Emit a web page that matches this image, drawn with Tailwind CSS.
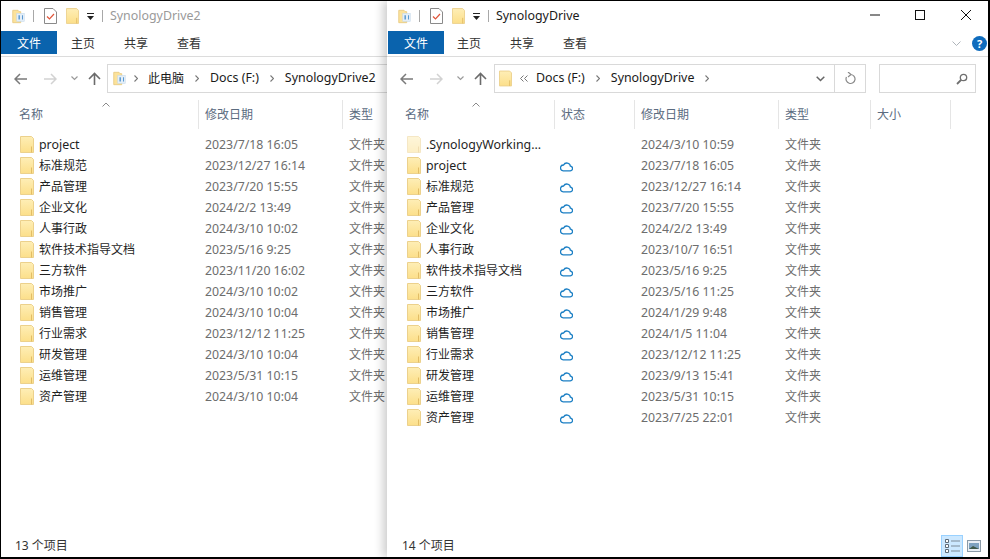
<!doctype html>
<html>
<head>
  <meta charset="UTF-8">
  <script src="https://cdn.jsdelivr.net/npm/@tailwindcss/browser@4"></script>
</head>
<body class="bg-white overflow-hidden font-['Noto_Sans','Noto_Sans_CJK_SC',sans-serif]">
<svg width="0" height="0" class="absolute">
  <defs>
    <linearGradient id="fold" x1="0" y1="0" x2="0" y2="1">
      <stop offset="0" stop-color="#feeeb6"/><stop offset="1" stop-color="#fcdf8a"/>
    </linearGradient>
    <symbol id="folder" viewBox="0 0 14 17">
      <path d="M.5.5h11l2 2v14H.5z" fill="url(#fold)" stroke="#ecd18c"/>
      <path d="M11.500 10.500v6" stroke="#e2bd66"/>
    </symbol>
    <symbol id="drive" viewBox="0 0 14 17">
      <path d="M.5 1.500h6l1 1.500h2v12.500H.5z" fill="#fce29a" stroke="#e8cb83"/>
      <rect x="5" y="5" width="8.500" height="9" fill="#e3eef8" stroke="#c3d7e8" stroke-width=".6"/>
      <path d="M7 7h1.500v5H7zM11 7h1v5h-1z" fill="#4a8fcb"/>
    </symbol>
    <symbol id="cloud" viewBox="0 0 13 11">
      <path d="M3.200 9.800h6.800a2.300 2.300 0 0 0 .4-4.600A3.600 3.600 0 0 0 3.600 4 2.900 2.900 0 0 0 3.200 9.800z" fill="none" stroke="#1b7fc4" stroke-width="1.300"/>
    </symbol>
  </defs>
</svg>

<div class="relative w-[990px] h-[559px] overflow-hidden bg-black">
  <div id="win-left" class="absolute left-[1px] top-[1px] w-[420px] h-[556px] bg-white"></div>
  <div id="win-right" class="absolute left-[387px] top-[1px] w-[601px] h-[556px] bg-white shadow-[-4px_0_9px_rgba(0,0,0,0.2)]"></div>
</div>

<script>
const leftRows = [
  ['project','2023/7/18 16:05'],['标准规范','2023/12/27 16:14'],['产品管理','2023/7/20 15:55'],
  ['企业文化','2024/2/2 13:49'],['人事行政','2024/3/10 10:02'],['软件技术指导文档','2023/5/16 9:25'],
  ['三方软件','2023/11/20 16:02'],['市场推广','2024/3/10 10:02'],['销售管理','2024/3/10 10:04'],
  ['行业需求','2023/12/12 11:25'],['研发管理','2024/3/10 10:04'],['运维管理','2023/5/31 10:15'],
  ['资产管理','2024/3/10 10:04']
];
const rightRows = [
  ['.SynologyWorking...','2024/3/10 10:59'],['project','2023/7/18 16:05'],['标准规范','2023/12/27 16:14'],
  ['产品管理','2023/7/20 15:55'],['企业文化','2024/2/2 13:49'],['人事行政','2023/10/7 16:51'],
  ['软件技术指导文档','2023/5/16 9:25'],['三方软件','2023/5/16 11:25'],['市场推广','2024/1/29 9:48'],
  ['销售管理','2024/1/5 11:04'],['行业需求','2023/12/12 11:25'],['研发管理','2023/9/13 15:41'],
  ['运维管理','2023/5/31 10:15'],['资产管理','2023/7/25 22:01']
];

function tabs(isRight) {
  return `
  <div class="flex h-[23px] items-center text-[12px] text-[#333]">
    <div class="${isRight ? 'ml-[1px]' : ''} w-[56px] h-full pt-[2px] bg-[#0a63ad] text-white flex items-center justify-center">文件</div>
    <div class="${isRight ? 'w-[13px]' : 'w-[14px]'}"></div><div class="w-[24px] pt-[2px]">主页</div>
    <div class="w-[29px]"></div><div class="w-[24px] pt-[2px]">共享</div>
    <div class="w-[29px]"></div><div class="w-[24px] pt-[2px]">查看</div>
  </div>`;
}

function titleBar(title, titleColor) {
  return `
  <div class="flex h-[30px] items-center">
    <svg class="ml-[11px] w-[13px] h-[15px]"><use href="#drive"/></svg>
    <div class="ml-[8px] w-px h-[12px] bg-[#a8a8a8]"></div>
    <svg class="ml-[10px]" width="13" height="16" viewBox="0 0 13 16"><path d="M.5.5h8.500l3.500 3.500v11.500H.5z" fill="#fff" stroke="#8a8a8a"/><path d="M3 8.500l2.500 2.500L10 6" fill="none" stroke="#e0553a" stroke-width="1.200"/></svg>
    <svg class="ml-[9px] w-[13px] h-[16px]"><use href="#folder"/></svg>
    <svg class="ml-[8px]" width="7" height="7" viewBox="0 0 7 7"><path d="M0 0h7v1H0zM0 3h7L3.500 7z" fill="#222"/></svg>
    <div class="ml-[8px] w-px h-[12px] bg-[#a8a8a8]"></div>
    <div class="ml-[7px] text-[12.4px] ${titleColor}">${title}</div>
  </div>`;
}

function navButtons() {
  return `
    <svg class="ml-[13px]" width="13" height="12" viewBox="0 0 13 12"><path d="M13 6H1.500M6 1L1 6l5 5" fill="none" stroke="#7a7a7a" stroke-width="1.500"/></svg>
    <svg class="ml-[17px]" width="13" height="12" viewBox="0 0 13 12"><path d="M0 6h11.500M7 1l5 5-5 5" fill="none" stroke="#d2d2d2" stroke-width="1.500"/></svg>
    <svg class="ml-[14px]" width="7" height="5" viewBox="0 0 7 5"><path d="M.5.5l3 3 3-3" fill="none" stroke="#9a9a9a" stroke-width="1.200"/></svg>
    <svg class="ml-[10px]" width="13" height="13" viewBox="0 0 13 13"><path d="M6.500 13V1.500M1 7l5.500-5.500L12 7" fill="none" stroke="#6b6b6b" stroke-width="1.600"/></svg>`;
}

const crumbArrow = `<svg class="mx-[11px] shrink-0" width="4" height="7" viewBox="0 0 4 7"><path d="M.5.5l3 3-3 3" fill="none" stroke="#777" stroke-width="1.100"/></svg>`;
const firstCrumbArrow = `<svg class="mx-[4px] shrink-0" width="4" height="7" viewBox="0 0 4 7"><path d="M.5.5l3 3-3 3" fill="none" stroke="#777" stroke-width="1.100"/></svg>`;

function header(cols, caretLeft) {
  const cells = cols.map((c, i) => `<div class="h-[29px] shrink-0 border-r border-[#e5e5e5] flex items-center text-[12px] text-[#5b6b7f] ${i === 0 ? 'pl-[18px]' : 'pl-[6px]'}" style="width:${c[1]}px">${c[0]}</div>`).join('');
  return `<div class="relative flex h-[29px] mt-[7px]">${cells}
    <svg class="absolute top-[2px]" style="left:${caretLeft}px" width="8" height="5" viewBox="0 0 8 5"><path d="M.5 4.500L4 1l3.500 3.500" fill="none" stroke="#8a8a8a"/></svg>
  </div>`;
}

function statusBar(text, showViews) {
  const views = showViews ? `
    <div class="ml-auto flex items-center h-full mr-[7px]">
      <div class="w-[22px] h-[22px] bg-[#cce8ff] border border-[#99d1ff] flex items-center justify-center">
        <svg width="15" height="14" viewBox="0 0 15 14"><path d="M.5.5h3v3h-3zM.5 5.500h3v3h-3zM.5 10.500h3v3h-3z" fill="#fff" stroke="#5d6b78"/><path d="M6 2h9M6 7h9M6 12h9" stroke="#7c8a97"/></svg>
      </div>
      <svg class="ml-[4px]" width="14" height="12" viewBox="0 0 14 12"><rect x=".5" y=".5" width="13" height="11" fill="#e9eff5" stroke="#8b9aa8"/><rect x="2" y="3" width="10" height="6" fill="#7fa3c0"/><path d="M2 9l4-3 6 3z" fill="#3f5a4a"/></svg>
    </div>` : '';
  return `<div class="absolute left-0 right-0 bottom-0 h-[22px] flex items-center text-[12px] text-[#333]"><div class="${showViews ? 'ml-[15px]' : 'ml-[14px]'}">${text}</div>${views}</div>`;
}

// file names in latin letters run slightly wider than the cjk ones and sit a bit higher
function nameClass(name) {
  return /^[.a-z]/.test(name) ? 'text-[12.4px] pt-[2px]' : 'text-[12px]';
}

// left window, sits behind the right one
document.getElementById('win-left').innerHTML = `
  ${titleBar('SynologyDrive2','text-[#9a9a9a]')}
  ${tabs(false)}
  <div class="h-[3px] border-b border-[#dcdcdc]"></div>
  <div class="flex items-center h-[29px] mt-[7px]">
    ${navButtons()}
    <div class="ml-[6px] w-[300px] h-[29px] border border-[#d9d9d9] flex items-center text-[12px] text-[#1a1a1a]">
      <svg class="ml-[5px] w-[13px] h-[15px]"><use href="#drive"/></svg>
      <span class="ml-[4px]"></span>${firstCrumbArrow}<span class="ml-[6px]">此电脑</span>${crumbArrow}<span class="text-[12.4px]">Docs (F:)</span>${crumbArrow}<span class="text-[12.4px]">SynologyDrive2</span>
    </div>
  </div>
  ${header([['名称',198],['修改日期',144],['类型',78]], 101)}
  <div class="mt-[5px]">
    ${leftRows.map(r => `
    <div class="flex items-center h-[21px] text-[12px]">
      <svg class="ml-[19px] w-[14px] h-[17px] shrink-0"><use href="#folder"/></svg>
      <div class="ml-[5px] w-[166px] shrink-0 text-[#1f1f1f] ${nameClass(r[0])}">${r[0]}</div>
      <div class="w-[144px] shrink-0 pt-[2px] text-[#6d6d6d] text-[12.3px]">${r[1]}</div>
      <div class="text-[#6d6d6d]">文件夹</div>
    </div>`).join('')}
  </div>
  ${statusBar('13 个项目', false)}`;

// right window, the active one
document.getElementById('win-right').innerHTML = `
  ${titleBar('SynologyDrive','text-[#1a1a1a]')}
  <div class="absolute right-[17px] top-[9px] flex items-center">
    <svg width="10" height="2" viewBox="0 0 10 2"><path d="M0 1h10" stroke="#111"/></svg>
    <svg class="ml-[35px]" width="10" height="10" viewBox="0 0 10 10"><rect x=".5" y=".5" width="9" height="9" fill="none" stroke="#111"/></svg>
    <svg class="ml-[36px]" width="10" height="10" viewBox="0 0 10 10"><path d="M0 0l10 10M10 0L0 10" stroke="#111"/></svg>
  </div>
  ${tabs(true)}
  <div class="absolute right-[1px] top-[35px] flex items-center gap-[11px]">
    <svg width="9" height="5" viewBox="0 0 9 5"><path d="M.5.5l4 4 4-4" fill="none" stroke="#aeb4ba"/></svg>
    <div class="w-[15px] h-[15px] rounded-full bg-[#0f6cbd] text-white text-[11px] font-bold leading-[15px] text-center">?</div>
  </div>
  <div class="h-[3px] border-b border-[#dcdcdc]"></div>
  <div class="flex items-center h-[29px] mt-[7px]">
    ${navButtons()}
    <div class="ml-[7px] w-[372px] h-[29px] border border-[#d9d9d9] flex items-center text-[12px] text-[#1a1a1a]">
      <svg class="ml-[4px] w-[13px] h-[17px]"><use href="#folder"/></svg>
      <svg class="ml-[8px]" width="8" height="7" viewBox="0 0 8 7"><path d="M3.500.5l-3 3 3 3M7.500.5l-3 3 3 3" fill="none" stroke="#777"/></svg>
      <span class="ml-[8px] text-[12.4px]">Docs (F:)</span>${crumbArrow}<span class="text-[12.4px]">SynologyDrive</span>${crumbArrow}
      <svg class="ml-auto mr-[9px]" width="9" height="6" viewBox="0 0 9 6"><path d="M.7.7l3.800 3.800L8.300.7" fill="none" stroke="#666" stroke-width="1.500"/></svg>
      <div class="w-[31px] h-full border-l border-[#d9d9d9] flex items-center justify-center">
        <svg width="11" height="13" viewBox="0 0 11 13"><path d="M5.500 2.500A4.500 4.500 0 1 1 1.500 5M3 0l3 2.500L3 5" fill="none" stroke="#8a8a8a" stroke-width="1.200"/></svg>
      </div>
    </div>
    <div class="ml-[13px] w-[97px] h-[29px] border border-[#d9d9d9] flex items-center justify-end pr-[7px]">
      <svg width="12" height="12" viewBox="0 0 12 12"><circle cx="7.500" cy="4.500" r="3.200" fill="none" stroke="#6f6f6f" stroke-width="1.300"/><path d="M5 7L1 11" stroke="#6f6f6f" stroke-width="1.800"/></svg>
    </div>
  </div>
  ${header([['名称',168],['状态',80],['修改日期',144],['类型',92],['大小',80]], 85)}
  <div class="mt-[5px]">
    ${rightRows.map((r, i) => `
    <div class="flex items-center h-[21px] text-[12px]">
      <svg class="ml-[20px] w-[14px] h-[17px] shrink-0 ${i === 0 ? 'opacity-50' : ''}"><use href="#folder"/></svg>
      <div class="ml-[5px] w-[134px] shrink-0 text-[#1f1f1f] ${nameClass(r[0])}">${r[0]}</div>
      <div class="w-[81px] shrink-0 pt-[2px]">${i === 0 ? '' : '<svg class="w-[13px] h-[11px]"><use href="#cloud"/></svg>'}</div>
      <div class="w-[144px] shrink-0 pt-[2px] text-[#6d6d6d] text-[12.3px]">${r[1]}</div>
      <div class="text-[#6d6d6d]">文件夹</div>
    </div>`).join('')}
  </div>
  ${statusBar('14 个项目', true)}`;
</script>
</body>
</html>
